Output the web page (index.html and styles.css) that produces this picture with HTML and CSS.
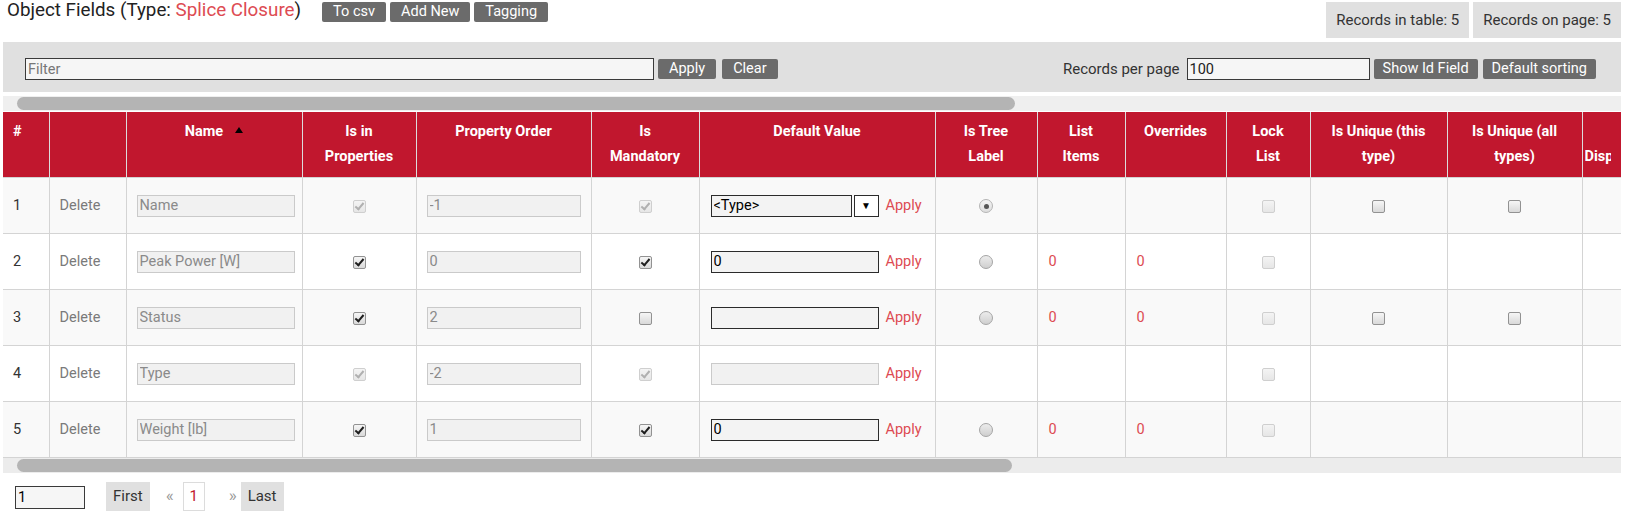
FILE: index.html
```html
<!DOCTYPE html>
<html lang="en">
<head>
<meta charset="utf-8">
<title>Object Fields</title>
<link rel="stylesheet" href="styles.css">
</head>
<body>
<div class="page">
  <header class="topbar">
    <div class="title-group">
      <h1 class="title">Object Fields (Type: <span class="accent">Splice Closure</span>)</h1>
      <div class="btns">
        <button class="btn">To csv</button>
        <button class="btn">Add New</button>
        <button class="btn">Tagging</button>
      </div>
    </div>
    <div class="stats">
      <div class="stat">Records in table: 5</div>
      <div class="stat">Records on page: 5</div>
    </div>
  </header>

  <div class="toolbar">
    <div class="filter-group">
      <input class="filter" type="text" placeholder="Filter">
      <button class="btn">Apply</button>
      <button class="btn">Clear</button>
    </div>
    <div class="rpp-group">
      <span class="rpp-label">Records per page</span>
      <input class="rpp" type="text" value="100">
      <button class="btn btn-tight">Show Id Field</button>
      <button class="btn btn-tight">Default sorting</button>
    </div>
  </div>

  <div class="scrollbar top"><div class="thumb"></div></div>

  <div class="grid-wrap">
    <table class="grid">
      <colgroup>
        <col class="c-num"><col class="c-del"><col class="c-name"><col class="c-props"><col class="c-order"><col class="c-mand"><col class="c-def"><col class="c-tree"><col class="c-list"><col class="c-over"><col class="c-lock"><col class="c-uniq"><col class="c-uniqall"><col class="c-disp">
      </colgroup>
      <thead>
        <tr>
          <th class="th-left">#</th>
          <th></th>
          <th>Name<span class="sort"></span></th>
          <th>Is in<br>Properties</th>
          <th>Property Order</th>
          <th>Is<br>Mandatory</th>
          <th>Default Value</th>
          <th>Is Tree<br>Label</th>
          <th>List<br>Items</th>
          <th>Overrides</th>
          <th>Lock<br>List</th>
          <th>Is Unique (this<br>type)</th>
          <th>Is Unique (all<br>types)</th>
          <th class="th-low"><span class="clip">Display</span></th>
        </tr>
      </thead>
      <tbody>
        <tr>
          <td class="num">1</td>
          <td class="del">Delete</td>
          <td class="inp-cell name"><input class="tin dis" type="text" value="Name" disabled></td>
          <td class="ctr"><span class="cb dis on"></span></td>
          <td class="inp-cell order"><input class="tin dis" type="text" value="-1" disabled></td>
          <td class="ctr"><span class="cb dis on"></span></td>
          <td class="def"><div class="def-row"><div class="combo"><input class="tin act combo-in" type="text" value="&lt;Type&gt;"><span class="drop">&#9660;</span></div><a class="apply">Apply</a></div></td>
          <td class="ctr"><span class="rd on"></span></td>
          <td class="lnk"></td>
          <td class="lnk"></td>
          <td class="ctr"><span class="cb dis"></span></td>
          <td class="ctr"><span class="cb"></span></td>
          <td class="ctr"><span class="cb"></span></td>
          <td></td>
        </tr>
        <tr>
          <td class="num">2</td>
          <td class="del">Delete</td>
          <td class="inp-cell name"><input class="tin dis" type="text" value="Peak Power [W]" disabled></td>
          <td class="ctr"><span class="cb on"></span></td>
          <td class="inp-cell order"><input class="tin dis" type="text" value="0" disabled></td>
          <td class="ctr"><span class="cb on"></span></td>
          <td class="def"><div class="def-row"><input class="tin act def-in" type="text" value="0"><a class="apply">Apply</a></div></td>
          <td class="ctr"><span class="rd"></span></td>
          <td class="lnk">0</td>
          <td class="lnk">0</td>
          <td class="ctr"><span class="cb dis"></span></td>
          <td></td>
          <td></td>
          <td></td>
        </tr>
        <tr>
          <td class="num">3</td>
          <td class="del">Delete</td>
          <td class="inp-cell name"><input class="tin dis" type="text" value="Status" disabled></td>
          <td class="ctr"><span class="cb on"></span></td>
          <td class="inp-cell order"><input class="tin dis" type="text" value="2" disabled></td>
          <td class="ctr"><span class="cb"></span></td>
          <td class="def"><div class="def-row"><input class="tin act def-in" type="text" value=""><a class="apply">Apply</a></div></td>
          <td class="ctr"><span class="rd"></span></td>
          <td class="lnk">0</td>
          <td class="lnk">0</td>
          <td class="ctr"><span class="cb dis"></span></td>
          <td class="ctr"><span class="cb"></span></td>
          <td class="ctr"><span class="cb"></span></td>
          <td></td>
        </tr>
        <tr>
          <td class="num">4</td>
          <td class="del">Delete</td>
          <td class="inp-cell name"><input class="tin dis" type="text" value="Type" disabled></td>
          <td class="ctr"><span class="cb dis on"></span></td>
          <td class="inp-cell order"><input class="tin dis" type="text" value="-2" disabled></td>
          <td class="ctr"><span class="cb dis on"></span></td>
          <td class="def"><div class="def-row"><input class="tin dis def-in" type="text" value="" disabled><a class="apply">Apply</a></div></td>
          <td></td>
          <td></td>
          <td></td>
          <td class="ctr"><span class="cb dis"></span></td>
          <td></td>
          <td></td>
          <td></td>
        </tr>
        <tr>
          <td class="num">5</td>
          <td class="del">Delete</td>
          <td class="inp-cell name"><input class="tin dis" type="text" value="Weight [lb]" disabled></td>
          <td class="ctr"><span class="cb on"></span></td>
          <td class="inp-cell order"><input class="tin dis" type="text" value="1" disabled></td>
          <td class="ctr"><span class="cb on"></span></td>
          <td class="def"><div class="def-row"><input class="tin act def-in" type="text" value="0"><a class="apply">Apply</a></div></td>
          <td class="ctr"><span class="rd"></span></td>
          <td class="lnk">0</td>
          <td class="lnk">0</td>
          <td class="ctr"><span class="cb dis"></span></td>
          <td></td>
          <td></td>
          <td></td>
        </tr>
      </tbody>
    </table>
  </div>

  <div class="scrollbar bottom"><div class="thumb"></div></div>

  <nav class="pager">
    <input class="page-input" type="text" value="1">
    <span class="pg-box first">First</span>
    <span class="pg-arrow prev">&laquo;</span>
    <span class="pg-cur">1</span>
    <span class="pg-arrow next">&raquo;</span>
    <span class="pg-box last">Last</span>
  </nav>
</div>
</body>
</html>
```

FILE: styles.css
```css
* { box-sizing: border-box; }

html, body {
  margin: 0;
  padding: 0;
  background: #fff;
}

body {
  font-family: Roboto, "Liberation Sans", Arial, sans-serif;
  font-size: 14.5px;
  color: #333;
}

.page {
  width: 1621px;
  padding-left: 3px;
}

/* ---------- top bar ---------- */
.topbar {
  display: flex;
  justify-content: space-between;
  align-items: flex-start;
  height: 42px;
}

.title-group {
  display: flex;
  align-items: flex-start;
  padding-left: 4px;
}

.title {
  margin: 0;
  font-size: 18.8px;
  font-weight: 400;
  line-height: 21px;
  color: #222;
}

.accent { color: #dd4b52; }

.btns {
  display: flex;
  gap: 4px;
  margin-left: 21px;
  margin-top: 2px;
}

.btn {
  font-family: Roboto, "Liberation Sans", Arial, sans-serif;
  font-size: 14.5px;
  height: 20px;
  line-height: 20px;
  padding: 0 11px;
  border: 0;
  border-radius: 2px;
  background: #6b6b6b;
  color: #fff;
  cursor: pointer;
  white-space: nowrap;
}

.btn.btn-tight { padding: 0 9px; }

.stats {
  display: flex;
  gap: 4px;
  margin-top: 2px;
}

.stat {
  height: 36px;
  line-height: 36px;
  padding: 0 10px;
  background: #e0e0e0;
  font-size: 15px;
  color: #333;
}

/* ---------- toolbar ---------- */
.toolbar {
  height: 50px;
  background: #e0e0e0;
  display: flex;
  align-items: center;
  justify-content: space-between;
  padding: 4px 25px 0 22px;
}

.filter-group, .rpp-group {
  display: flex;
  align-items: center;
}

.filter {
  width: 629px;
  height: 22px;
  border: 1px solid #3a3a3a;
  background: #f6f6f6;
  font-family: Roboto, "Liberation Sans", Arial, sans-serif;
  font-size: 14.5px;
  padding: 0 2px;
  color: #222;
  margin-right: 4px;
}
.filter::placeholder { color: #777; }

.filter-group .btn + .btn { margin-left: 6px; }

.rpp-label {
  font-size: 15px;
  color: #333;
  margin-right: 7px;
}

.rpp {
  width: 183px;
  height: 22px;
  border: 1px solid #3a3a3a;
  background: #f6f6f6;
  font-family: Roboto, "Liberation Sans", Arial, sans-serif;
  font-size: 14.5px;
  padding: 0 2px;
  color: #222;
  margin-right: 4px;
}

.rpp-group .btn + .btn { margin-left: 5px; }

/* ---------- scrollbars ---------- */
.scrollbar {
  height: 15px;
  background: #efefef;
  width: 1618px;
  padding: 1px 0 0 14px;
}

.scrollbar.top {
  margin-top: 4px;
  margin-bottom: 1px;
}

.scrollbar .thumb {
  height: 13px;
  width: 998px;
  background: #b4b4b4;
  border-radius: 7px;
}

.scrollbar.bottom {
  background: #ececec;
}
.scrollbar.bottom .thumb { width: 995px; }

/* ---------- grid ---------- */
.grid-wrap {
  width: 1618px;
  overflow: hidden;
}

.grid {
  border-collapse: collapse;
  table-layout: fixed;
  width: 1739px;
}

.c-num { width: 46px; }
.c-del { width: 77px; }
.c-name { width: 176px; }
.c-props { width: 114px; }
.c-order { width: 175px; }
.c-mand { width: 108px; }
.c-def { width: 236px; }
.c-tree { width: 102px; }
.c-list { width: 88px; }
.c-over { width: 101px; }
.c-lock { width: 84px; }
.c-uniq { width: 137px; }
.c-uniqall { width: 135px; }
.c-disp { width: 160px; }

.grid th {
  background: #c1172e;
  color: #fff;
  font-weight: 700;
  font-size: 14.5px;
  line-height: 25px;
  height: 65px;
  padding: 7px 4px 8px;
  vertical-align: top;
  text-align: center;
  border-left: 1px solid #dcdcdc;
  border-right: 1px solid #dcdcdc;
  white-space: nowrap;
}

.grid th.th-left {
  text-align: left;
  padding-left: 10px;
  border-left: 0;
}

.grid th.th-low {
  text-align: left;
  padding-top: 32px;
  padding-left: 2px;
}

.clip {
  display: inline-block;
  width: 26px;
  overflow: hidden;
  vertical-align: top;
}

.sort {
  display: inline-block;
  width: 0;
  height: 0;
  border-left: 4.5px solid transparent;
  border-right: 4.5px solid transparent;
  border-bottom: 6px solid #000;
  margin-left: 12px;
  vertical-align: 3px;
}

.grid td {
  height: 56px;
  border: 1px solid #d4d4d4;
  padding: 0 10px;
  vertical-align: middle;
  font-size: 14.5px;
}

.grid tbody tr:nth-child(odd) td { background: #f9f9f9; }
.grid tbody tr:nth-child(even) td { background: #fff; }

.grid td:first-child { border-left: 0; }

.num { color: #333; }
.grid td.del { color: #7a7a7a; padding-left: 10px; }

.grid td.inp-cell.name { padding: 0 7px 0 10px; }
.grid td.inp-cell.order { padding: 0 10px 0 10px; }

.tin {
  display: block;
  width: 100%;
  min-width: 0;
  height: 22px;
  font-family: Roboto, "Liberation Sans", Arial, sans-serif;
  font-size: 14.5px;
  padding: 0 2px;
  margin: 0;
}

.tin.dis {
  background: #f1f1f1;
  border: 1px solid #cacaca;
  color: #8a8a8a;
}

.tin.act {
  background: #f3f3f3;
  border: 1px solid #2b2b2b;
  color: #000;
}

.grid td.def { padding: 0 10px 0 11px; }

.def-row {
  display: flex;
  align-items: center;
  gap: 7px;
}

.tin.def-in {
  flex: none;
  width: 168px;
}

.combo {
  flex: none;
  display: flex;
  gap: 2px;
  width: 168px;
}

.tin.combo-in {
  flex: none;
  width: 141px;
}

.drop {
  flex: none;
  width: 25px;
  height: 22px;
  border: 1px solid #2b2b2b;
  background: #fff;
  color: #000;
  font-size: 10px;
  display: flex;
  align-items: center;
  justify-content: center;
}

.apply {
  color: #dd4b52;
  font-size: 14.5px;
  cursor: pointer;
}

.grid td.lnk {
  color: #dd4b52;
  padding-left: 11px;
}

.ctr { text-align: center; }

/* checkbox */
.cb {
  display: inline-block;
  width: 13px;
  height: 13px;
  border: 1px solid #929292;
  border-radius: 2px;
  background: linear-gradient(#f6f6f6, #d9d9d9);
  position: relative;
  vertical-align: middle;
}

.cb.on::after {
  content: "";
  position: absolute;
  left: 3.5px;
  top: 0.5px;
  width: 3px;
  height: 7px;
  border-right: 2px solid #1e1e1e;
  border-bottom: 2px solid #1e1e1e;
  transform: rotate(40deg);
}

.cb.dis {
  border-color: #cfcfcf;
  background: linear-gradient(#f4f4f4, #e6e6e6);
}
.cb.dis.on::after {
  border-color: #b0b0b0;
}

/* radio */
.rd {
  display: inline-block;
  width: 14px;
  height: 14px;
  border-radius: 50%;
  border: 1px solid #a6a6a6;
  background: linear-gradient(#ececec, #cfcfcf);
  position: relative;
  vertical-align: middle;
}

.rd.on {
  background: linear-gradient(#f4f4f4, #dedede);
  border-color: #b5b5b5;
}
.rd.on::after {
  content: "";
  position: absolute;
  left: 3.5px;
  top: 3.5px;
  width: 5px;
  height: 5px;
  border-radius: 50%;
  background: #555;
}

/* ---------- pager ---------- */
.pager {
  display: flex;
  align-items: center;
  margin-top: 9px;
  height: 29px;
}

.page-input {
  width: 70px;
  height: 23px;
  margin-left: 12px;
  margin-top: 2px;
  border: 1px solid #3a3a3a;
  background: #f6f6f6;
  font-family: Roboto, "Liberation Sans", Arial, sans-serif;
  font-size: 14.5px;
  padding: 0 2px;
  color: #000;
}

.pg-box {
  height: 29px;
  line-height: 29px;
  background: #e0e0e0;
  color: #333;
  font-size: 15px;
  padding: 0 7px;
}

.first { margin-left: 21px; }

.pg-arrow {
  color: #9a9a9a;
  font-size: 17px;
  line-height: 26px;
  align-self: flex-start;
}

.prev { margin-left: 16px; margin-right: 9px; }
.next { margin-left: 24px; margin-right: 4px; }

.pg-cur {
  height: 29px;
  line-height: 27px;
  width: 22px;
  text-align: center;
  border: 1px solid #dcdcdc;
  background: #fff;
  color: #c1172e;
  font-size: 15px;
}
```
